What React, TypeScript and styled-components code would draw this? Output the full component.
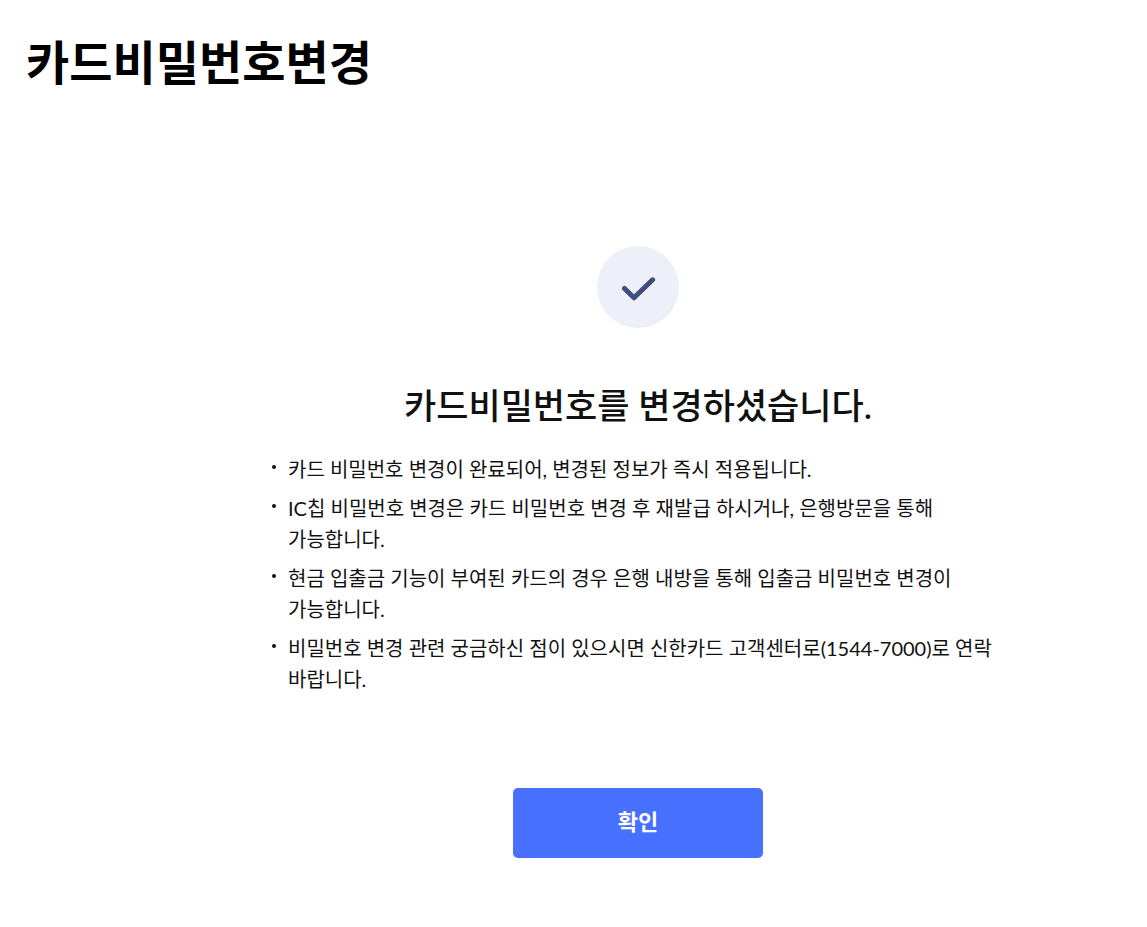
import React from "react";
import styled, { createGlobalStyle } from "styled-components";

const Global = createGlobalStyle`
  * { box-sizing: border-box; }
  body {
    margin: 0;
    background: #fff;
    color: #111;
    font-family: Lato, "Noto Sans CJK KR", sans-serif;
    word-break: keep-all;
  }
`;

const Page = styled.div`
  padding: 28px 0 68px 26px;
`;

const PageTitle = styled.h1`
  margin: 0;
  font-size: 47px;
  line-height: 68px;
  font-weight: 700;
  color: #000;
`;

const Result = styled.main`
  display: flex;
  flex-direction: column;
  align-items: center;
  padding: 150px 0 0 103px;
`;

const Badge = styled.div`
  display: grid;
  place-items: center;
  width: 82px;
  height: 82px;
  border-radius: 50%;
  background: #edeff9;
`;

const Message = styled.h2`
  margin: 51px 0 0;
  font-size: 35px;
  line-height: 52px;
  font-weight: 500;
`;

const Notes = styled.ul`
  width: 100%;
  max-width: 732px;
  margin: 23px 0 0;
  padding: 0;
  list-style: none;
`;

const Note = styled.li`
  display: flex;
  gap: 12px;
  font-size: 20px;
  line-height: 31px;

  & + & { margin-top: 8px; }

  &::before {
    content: "";
    flex: none;
    width: 4px;
    height: 4px;
    margin-top: 11px;
    border-radius: 50%;
    background: #111;
  }
`;

const ConfirmButton = styled.button`
  width: 250px;
  height: 70px;
  margin-top: 93px;
  padding: 0 0 6px;
  border: 0;
  border-radius: 5px;
  background: #4870ff;
  color: #fff;
  font: inherit;
  font-size: 22px;
  font-weight: 700;
  cursor: pointer;
`;

const notes = [
  "카드 비밀번호 변경이 완료되어, 변경된 정보가 즉시 적용됩니다.",
  "IC칩 비밀번호 변경은 카드 비밀번호 변경 후 재발급 하시거나, 은행방문을 통해 가능합니다.",
  "현금 입출금 기능이 부여된 카드의 경우 은행 내방을 통해 입출금 비밀번호 변경이 가능합니다.",
  "비밀번호 변경 관련 궁금하신 점이 있으시면 신한카드 고객센터로(1544-7000)로 연락 바랍니다.",
];

export default function App() {
  return (
    <Page lang="ko">
      <Global />
      <PageTitle>카드비밀번호변경</PageTitle>
      <Result>
        <Badge>
          <svg width="36" height="28" viewBox="0 0 36 28" fill="none" aria-hidden="true">
            <path d="M4.5 15.5 14 24.8 32.6 6.8" stroke="#404d7d" strokeWidth="5" strokeLinecap="round" strokeLinejoin="round" />
          </svg>
        </Badge>
        <Message>카드비밀번호를 변경하셨습니다.</Message>
        <Notes>
          {notes.map((note) => (
            <Note key={note}>{note}</Note>
          ))}
        </Notes>
        <ConfirmButton type="button">확인</ConfirmButton>
      </Result>
    </Page>
  );
}
